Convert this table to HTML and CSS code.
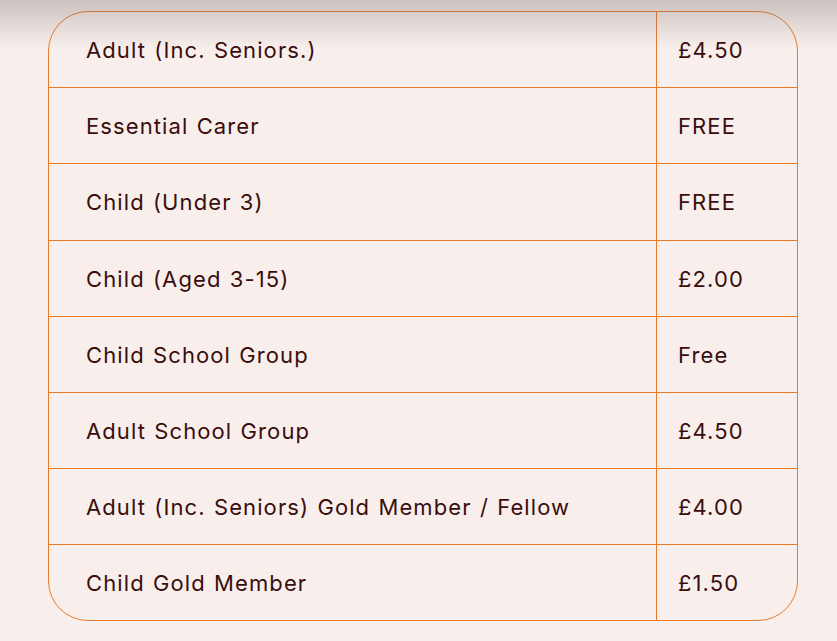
FILE: index.html
```html
<!DOCTYPE html>
<html lang="en">
<head>
<meta charset="utf-8">
<title>Prices</title>
<link rel="stylesheet" href="styles.css">
</head>
<body>
<div class="shade"></div>
<main class="wrap">
  <div class="prices">
    <div class="cell name">Adult (Inc. Seniors.)</div><div class="cell price">£4.50</div>
    <div class="cell name">Essential Carer</div><div class="cell price">FREE</div>
    <div class="cell name">Child (Under 3)</div><div class="cell price">FREE</div>
    <div class="cell name">Child (Aged 3-15)</div><div class="cell price">£2.00</div>
    <div class="cell name">Child School Group</div><div class="cell price">Free</div>
    <div class="cell name">Adult School Group</div><div class="cell price">£4.50</div>
    <div class="cell name">Adult (Inc. Seniors) Gold Member / Fellow</div><div class="cell price">£4.00</div>
    <div class="cell name">Child Gold Member</div><div class="cell price">£1.50</div>
  </div>
</main>
</body>
</html>
```

FILE: styles.css
```css
html, body {
  margin: 0;
  padding: 0;
  background: #f8efec;
  height: 100%;
}
body {
  position: relative;
  font-family: "Inter", "Open Sans", sans-serif;
  color: #3a0d0c;
}
.shade {
  position: absolute;
  left: 0;
  top: 0;
  right: 0;
  height: 48px;
  background: linear-gradient(to bottom, rgba(120, 110, 108, 0.35), rgba(248, 239, 236, 0));
  pointer-events: none;
}
.wrap {
  padding: 11px 0 0 48px;
}
.prices {
  width: 748px;
  border: 1px solid #e8792a;
  border-radius: 40px;
  overflow: hidden;
  display: grid;
  grid-template-columns: 607px 1fr;
  grid-template-rows: 75px 76px 77px repeat(5, 76px);
}
.cell {
  display: flex;
  align-items: center;
  font-size: 22px;
  letter-spacing: 1.1px;
  word-spacing: 1px;
  border-top: 1px solid #e8792a;
}
.cell:nth-child(1), .cell:nth-child(2) {
  border-top: none;
}
.name {
  padding-left: 37px;
}
.price {
  border-left: 1px solid #e8792a;
  padding-left: 21px;
}
```
